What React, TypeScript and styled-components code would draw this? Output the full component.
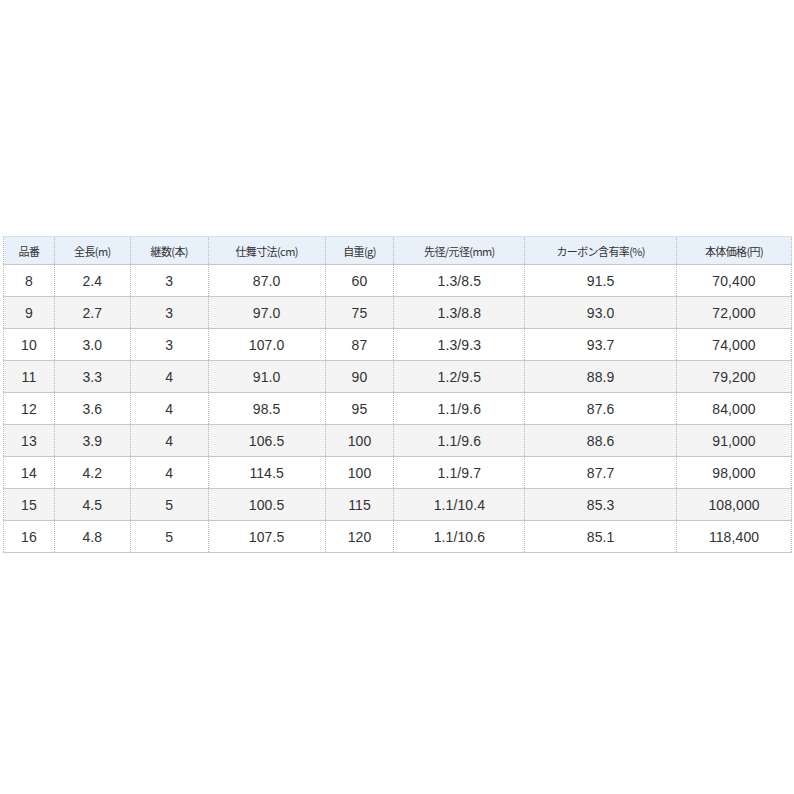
import React from "react";
import styled, { createGlobalStyle } from "styled-components";

const GlobalStyle = createGlobalStyle`
  html, body { margin: 0; padding: 0; background: #ffffff; }
  body { font-family: "Liberation Sans", "Noto Sans CJK JP", sans-serif; color: #333333; }
`;

const Page = styled.div`
  min-height: 794px;
  box-sizing: border-box;
  padding: 0 2px 5px 3px;
  display: flex;
  align-items: center;
  justify-content: center;
`;

const Table = styled.table`
  width: 789px;
  border-collapse: collapse;
  table-layout: fixed;
  border-left: 1px dotted #b8b8b8;
  border-right: 1px dotted #b8b8b8;
`;

const Col = styled.col<{ $w: number }>`
  width: ${(p) => ((p.$w / 789) * 100).toFixed(3)}%;
`;

const HeadCell = styled.th`
  height: 27px;
  padding: 0;
  background: #e8f0fa;
  border-top: 1px solid #d8e0ea;
  border-bottom: 1px solid #c8c8c8;
  border-left: 1px dotted #b8b8b8;
  border-right: 1px dotted #b8b8b8;
  font-family: "Noto Sans CJK JP", "Liberation Sans", sans-serif;
  font-size: 11px;
  font-weight: normal;
  color: #333333;
  text-align: center;
  vertical-align: middle;
  letter-spacing: -0.6px;
  white-space: nowrap;
`;

const Row = styled.tr<{ $alt: boolean }>`
  background: ${(p) => (p.$alt ? "#f4f4f4" : "#ffffff")};
`;

const Cell = styled.td`
  height: 31px;
  padding: 0;
  border-bottom: 1px solid #c8c8c8;
  border-left: 1px dotted #b8b8b8;
  border-right: 1px dotted #b8b8b8;
  font-family: "Liberation Sans", sans-serif;
  font-size: 14px;
  color: #333333;
  text-align: center;
  vertical-align: middle;
  letter-spacing: 0.1px;
`;

const headers: [string, number][] = [
  ["品番", 51],
  ["全長(m)", 76],
  ["継数(本)", 78],
  ["仕舞寸法(cm)", 117],
  ["自重(g)", 69],
  ["先径/元径(mm)", 131],
  ["カーボン含有率(%)", 152],
  ["本体価格(円)", 115],
];

const rows: string[][] = [
  ["8", "2.4", "3", "87.0", "60", "1.3/8.5", "91.5", "70,400"],
  ["9", "2.7", "3", "97.0", "75", "1.3/8.8", "93.0", "72,000"],
  ["10", "3.0", "3", "107.0", "87", "1.3/9.3", "93.7", "74,000"],
  ["11", "3.3", "4", "91.0", "90", "1.2/9.5", "88.9", "79,200"],
  ["12", "3.6", "4", "98.5", "95", "1.1/9.6", "87.6", "84,000"],
  ["13", "3.9", "4", "106.5", "100", "1.1/9.6", "88.6", "91,000"],
  ["14", "4.2", "4", "114.5", "100", "1.1/9.7", "87.7", "98,000"],
  ["15", "4.5", "5", "100.5", "115", "1.1/10.4", "85.3", "108,000"],
  ["16", "4.8", "5", "107.5", "120", "1.1/10.6", "85.1", "118,400"],
];

export default function App() {
  return (
    <>
      <GlobalStyle />
      <Page>
        <Table>
          <colgroup>
            {headers.map(([label, w]) => (
              <Col key={label} $w={w} />
            ))}
          </colgroup>
          <thead>
            <tr>
              {headers.map(([label]) => (
                <HeadCell key={label}>{label}</HeadCell>
              ))}
            </tr>
          </thead>
          <tbody>
            {rows.map((r, i) => (
              <Row key={r[0]} $alt={i % 2 === 1}>
                {r.map((v, j) => (
                  <Cell key={j}>{v}</Cell>
                ))}
              </Row>
            ))}
          </tbody>
        </Table>
      </Page>
    </>
  );
}
